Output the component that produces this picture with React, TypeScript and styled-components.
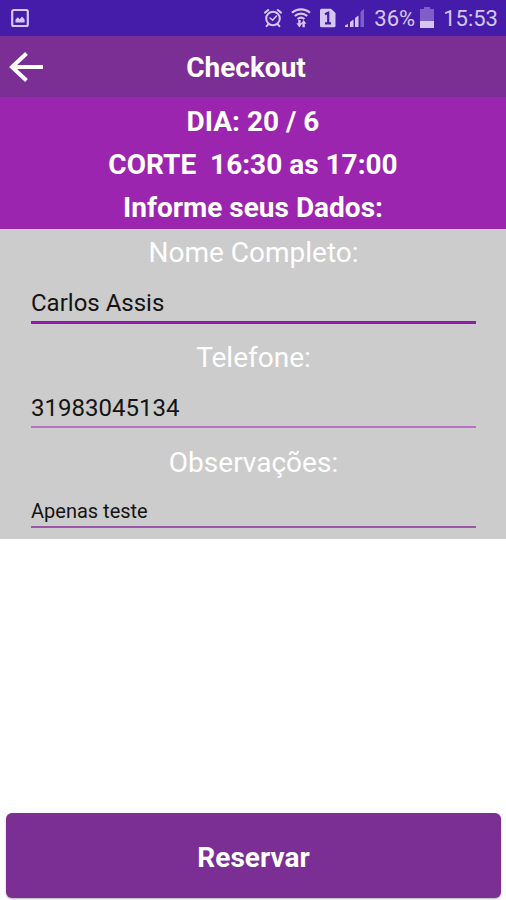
import React from 'react';
import styled, { createGlobalStyle } from 'styled-components';

const GlobalStyle = createGlobalStyle`
  *, *::before, *::after { box-sizing: border-box; }
  body { margin: 0; background: #ffffff; font-family: Roboto, "Liberation Sans", sans-serif; }
`;

const Screen = styled.div`
  display: flex;
  flex-direction: column;
  min-height: 100vh;
`;

const StatusBar = styled.div`
  display: flex;
  align-items: center;
  justify-content: space-between;
  height: 36px;
  padding: 0 8px 0 11px;
  background: #451ca9;
  color: #d6c6f4;
`;

const StatusGroup = styled.div`
  display: flex;
  align-items: center;
  gap: 9px;
`;

const StatusText = styled.span`
  padding-top: 2px;
  font-size: 22px;
  line-height: 34px;
`;

const Battery = styled.span`
  display: flex;
  align-items: center;
  gap: 5px;
`;

const Header = styled.header`
  display: grid;
  grid-template-columns: 52px 1fr 66px;
  align-items: center;
  height: 61px;
  background: #7b2e94;
`;

const BackButton = styled.button`
  display: flex;
  align-items: center;
  height: 60px;
  padding: 0 0 0 8px;
  border: 0;
  background: transparent;
  color: #ffffff;
  cursor: pointer;
`;

const Title = styled.h1`
  margin: 0;
  padding-top: 3px;
  color: #ffffff;
  font-size: 28px;
  font-weight: 700;
  line-height: 44px;
  text-align: center;
`;

const Summary = styled.section`
  padding-top: 3px;
  background: #9c25b0;
`;

const SummaryLine = styled.p`
  margin: 0;
  color: #ffffff;
  font-size: 28px;
  font-weight: 700;
  line-height: 43px;
  text-align: center;
  white-space: pre-wrap;
`;

const Form = styled.form`
  display: flex;
  flex: 1;
  flex-direction: column;
`;

const Fields = styled.div`
  padding: 2px 30px 11px 31px;
  background: #cccccc;
`;

const Field = styled.div<{ $last?: boolean }>`
  display: flex;
  flex-direction: column;
  gap: 7px;
  min-height: ${({ $last }) => ($last ? '0' : '105px')};
`;

const Label = styled.label`
  color: #ffffff;
  font-size: 28px;
  line-height: 44px;
  text-align: center;
`;

const TextInput = styled.input<{ $line: string; $thick?: boolean; $small?: boolean }>`
  width: 100%;
  height: ${({ $small, $thick }) => ($small ? '36px' : $thick ? '42px' : '41px')};
  padding: 3px 0 0;
  border: 0;
  border-bottom: ${({ $thick }) => ($thick ? '3px' : '2px')} solid ${({ $line }) => $line};
  border-radius: 0;
  outline: 0;
  background: transparent;
  color: #141414;
  font-family: inherit;
  font-size: ${({ $small }) => ($small ? '20px' : '24px')};
`;

const SubmitButton = styled.button`
  height: 85px;
  margin: auto 5px 2px 6px;
  padding: 3px 0 0;
  border: 0;
  border-radius: 6px;
  background: #7b2e94;
  box-shadow: 0 1px 2px rgba(0, 0, 0, 0.3);
  color: #ffffff;
  font-family: inherit;
  font-size: 28px;
  font-weight: 700;
  cursor: pointer;
`;

const PictureIcon = () => (
  <svg width="18" height="20" viewBox="0 0 18 20" fill="none" aria-hidden="true">
    <rect x="1.2" y="2" width="15.6" height="16" rx="1.5" stroke="currentColor" strokeWidth="2.2" />
    <path d="M4.5 14.5v-3l2.3-2.3 2 2 2.2-2.8 2.6 3.2v2.9z" fill="currentColor" />
  </svg>
);

const AlarmIcon = () => (
  <svg width="18" height="20" viewBox="0 0 18 20" fill="none" stroke="currentColor" strokeLinecap="round" aria-hidden="true">
    <circle cx="9" cy="10.5" r="6.8" strokeWidth="2" />
    <path d="M1 4.6 4.2 2M17 4.6 13.8 2M4.2 16.4 2.6 18.2M13.8 16.4l1.6 1.8" strokeWidth="2" />
    <path d="m6 10 2.6 2.2L12.5 8" strokeWidth="1.6" />
  </svg>
);

const WifiIcon = () => (
  <svg width="20" height="20" viewBox="0 0 20 20" fill="none" aria-hidden="true">
    <path d="M1 4.8c5-4.6 13-4.6 18 0M3.8 8c3.6-3.2 8.8-3.2 12.4 0M6.6 11c2-1.7 4.8-1.7 6.8 0" stroke="currentColor" strokeWidth="2.2" />
    <path d="M5.4 15.2h1.8V12h2.4v3.2h1.8L8.400 19.500zM9.800 15.800 12.600 12l2.800 3.800h-1.600v3.400h-2.400v-3.400z" fill="currentColor" />
  </svg>
);

const SimIcon = () => (
  <svg width="16" height="20" viewBox="0 0 16 20" aria-hidden="true">
    <path d="M1.5 0.8H11L15.5 5v12.7a1.5 1.5 0 0 1-1.5 1.5H1.5A1.5 1.5 0 0 1 0 17.7V2.3A1.5 1.5 0 0 1 1.5.8Z" fill="currentColor" />
    <path d="M5 6.3 8.2 4.8V15.5M5 15.3h6" fill="none" stroke="#451ca9" strokeWidth="2.2" />
  </svg>
);

const SignalIcon = () => (
  <svg width="20" height="20" viewBox="0 0 20 20" fill="currentColor" aria-hidden="true">
    <path d="M0 19v-1.500L3 16v3zM5 14l3.500-2.500V19H5zM10 10l3.500-2.500V19H10z" />
    <path d="M15.500 4 19 .8V19h-3.500z" opacity="0.4" />
  </svg>
);

const BatteryIcon = () => (
  <svg width="14" height="22" viewBox="0 0 14 22" fill="currentColor" aria-hidden="true">
    <path d="M4 0h6v2h4v12H0V2h4z" opacity="0.4" />
    <path d="M0 14h14v7H0z" />
  </svg>
);

const BackArrow = () => (
  <svg width="35" height="32" viewBox="0 0 35 32" fill="none" stroke="currentColor" strokeWidth="4" aria-hidden="true">
    <path d="M18.500 2.500 4 16l14.500 13.500M4 16h31" />
  </svg>
);

export default function App() {
  return (
    <Screen>
      <GlobalStyle />
      <StatusBar>
        <PictureIcon />
        <StatusGroup>
          <AlarmIcon />
          <WifiIcon />
          <SimIcon />
          <SignalIcon />
          <Battery>
            <StatusText>36%</StatusText>
            <BatteryIcon />
          </Battery>
          <StatusText>15:53</StatusText>
        </StatusGroup>
      </StatusBar>
      <Header>
        <BackButton type="button" aria-label="Voltar">
          <BackArrow />
        </BackButton>
        <Title>Checkout</Title>
      </Header>
      <Summary>
        <SummaryLine>DIA: 20 / 6</SummaryLine>
        <SummaryLine>{'CORTE  16:30 as 17:00'}</SummaryLine>
        <SummaryLine>Informe seus Dados:</SummaryLine>
      </Summary>
      <Form onSubmit={(event) => event.preventDefault()}>
        <Fields>
          <Field>
            <Label htmlFor="nome">Nome Completo:</Label>
            <TextInput id="nome" type="text" defaultValue="Carlos Assis" $line="#931bab" $thick />
          </Field>
          <Field>
            <Label htmlFor="telefone">Telefone:</Label>
            <TextInput id="telefone" type="tel" defaultValue="31983045134" $line="#b873c4" />
          </Field>
          <Field $last>
            <Label htmlFor="observacoes">Observações:</Label>
            <TextInput id="observacoes" type="text" defaultValue="Apenas teste" $line="#9a57aa" $small />
          </Field>
        </Fields>
        <SubmitButton type="submit">Reservar</SubmitButton>
      </Form>
    </Screen>
  );
}
